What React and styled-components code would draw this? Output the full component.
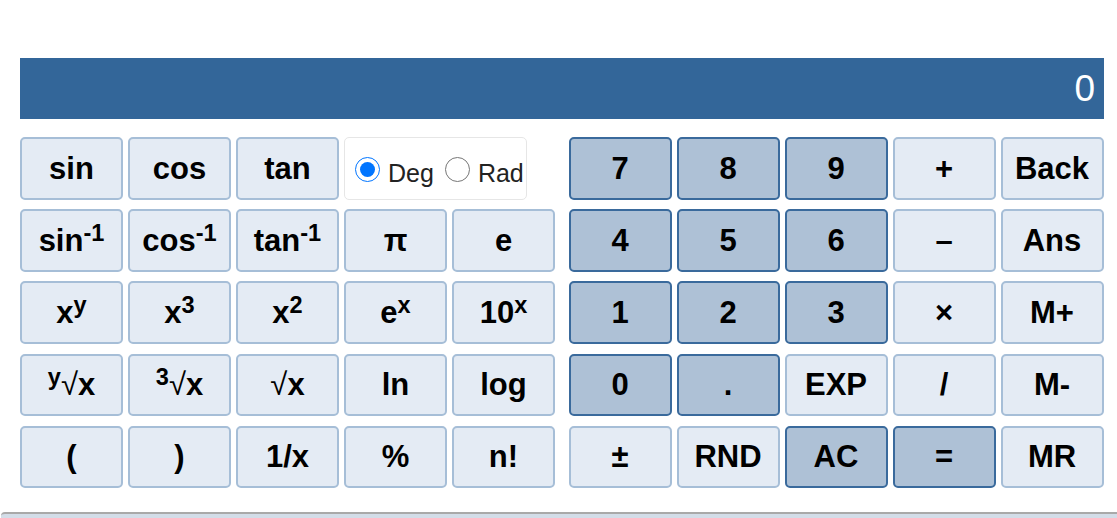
import React from "react";
import styled, { createGlobalStyle } from "styled-components";

const Global = createGlobalStyle`
  html, body { margin: 0; padding: 0; background: #ffffff; }
  body { font-family: "Liberation Sans", Arial, Helvetica, sans-serif; }
`;

const Page = styled.div`
  padding: 58px 13px 0 20px;
`;

const Display = styled.div`
  height: 61px;
  background: #336699;
  color: #ffffff;
  font-size: 37px;
  line-height: 61px;
  text-align: right;
  padding-right: 9px;
  box-sizing: border-box;
`;

const Keypad = styled.div`
  display: flex;
  gap: 13.5px;
  margin-top: 18.3px;
`;

const Grid = styled.div`
  display: grid;
  grid-template-columns: repeat(5, 103px);
  grid-auto-rows: 62.5px;
  column-gap: 5px;
  row-gap: 9.6px;
`;

const Key = styled.button`
  box-sizing: border-box;
  display: flex;
  align-items: center;
  justify-content: center;
  margin: 0;
  padding: 0;
  font-family: "Liberation Sans", Arial, Helvetica, sans-serif;
  font-weight: bold;
  font-size: 31px;
  color: #000000;
  border-radius: 5px;
  border: 2px solid ${(p) => (p.$dark ? "#3a6a9c" : "#a6bed7")};
  background: ${(p) => (p.$dark ? "#aec1d6" : "#e4ebf4")};
  cursor: pointer;
`;

const Sup = styled.span`
  font-size: 0.76em;
  vertical-align: 0.42em;
  line-height: 1;
`;

const Root = styled.span`
  font-weight: normal;
`;

const RadioBox = styled.div`
  grid-column: span 2;
  justify-self: start;
  box-sizing: border-box;
  width: 183px;
  border: 1px solid #e6e6e6;
  border-radius: 5px;
  display: flex;
  align-items: center;
  padding: 2px 0 0 10px;
  font-size: 25px;
  color: #222222;
`;

const Radio = styled.input`
  width: 25px;
  height: 25px;
  margin: 0 8px 0 ${(p) => (p.$first ? "0" : "11px")};
  accent-color: #0075ff;
`;

const RadioLabel = styled.span`
  margin-top: 7px;
`;

const Footer = styled.div`
  margin: 23.5px 0 0 1px;
  height: 8px;
  border-top: 2px solid #a9a9a9;
  border-top-left-radius: 4px;
  background: #d3dde8;
`;

const leftRows = [
  [["sin"], ["cos"], ["tan"]],
  [["sin", "-1"], ["cos", "-1"], ["tan", "-1"], ["π"], ["e"]],
  [["x", "y"], ["x", "3"], ["x", "2"], ["e", "x"], ["10", "x"]],
];

const right = [
  ["7", 1], ["8", 1], ["9", 1], ["+", 0], ["Back", 0],
  ["4", 1], ["5", 1], ["6", 1], ["–", 0], ["Ans", 0],
  ["1", 1], ["2", 1], ["3", 1], ["×", 0], ["M+", 0],
  ["0", 1], [".", 1], ["EXP", 0], ["/", 0], ["M-", 0],
  ["±", 0], ["RND", 0], ["AC", 1], ["=", 1], ["MR", 0],
];

function SupKey({ base, sup }) {
  return (
    <Key>
      <span>
        {base}
        {sup && <Sup>{sup}</Sup>}
      </span>
    </Key>
  );
}

export default function App() {
  return (
    <>
      <Global />
      <Page>
        <Display>0</Display>
        <Keypad>
          <Grid>
            {leftRows[0].map(([b]) => (
              <SupKey key={b} base={b} />
            ))}
            <RadioBox>
              <Radio type="radio" name="unit" defaultChecked $first />
              <RadioLabel>Deg</RadioLabel>
              <Radio type="radio" name="unit" />
              <RadioLabel>Rad</RadioLabel>
            </RadioBox>
            {leftRows[1].map(([b, s]) => (
              <SupKey key={b + "i"} base={b} sup={s} />
            ))}
            {leftRows[2].map(([b, s]) => (
              <SupKey key={b + s} base={b} sup={s} />
            ))}
            <Key>
              <span>
                <Sup>y</Sup>
                <Root>√</Root>x
              </span>
            </Key>
            <Key>
              <span>
                <Sup>3</Sup>
                <Root>√</Root>x
              </span>
            </Key>
            <Key>
              <span>
                <Root>√</Root>x
              </span>
            </Key>
            <Key>ln</Key>
            <Key>log</Key>
            <Key>(</Key>
            <Key>)</Key>
            <Key>1/x</Key>
            <Key>%</Key>
            <Key>n!</Key>
          </Grid>
          <Grid>
            {right.map(([label, dark]) => (
              <Key key={label} $dark={!!dark}>
                {label}
              </Key>
            ))}
          </Grid>
        </Keypad>
      </Page>
      <Footer />
    </>
  );
}
